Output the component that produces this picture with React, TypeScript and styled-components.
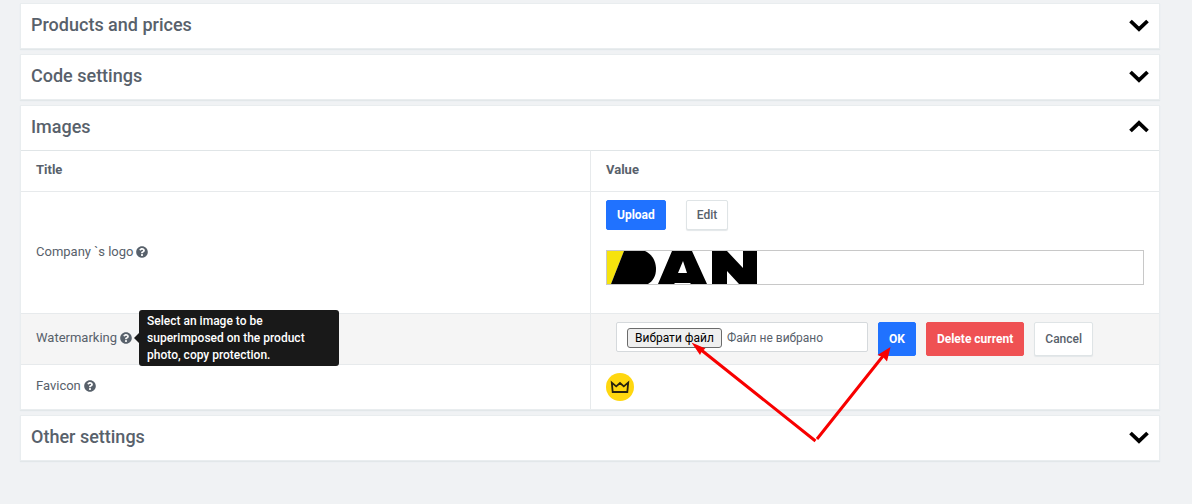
import React from "react";
import styled, { createGlobalStyle, css } from "styled-components";
import { FaQuestionCircle } from "react-icons/fa";

const GlobalStyle = createGlobalStyle`
  * { box-sizing: border-box; }
  body {
    margin: 0;
    background: #f0f2f4;
    color: #58616b;
    font-family: Roboto, "Liberation Sans", sans-serif;
    font-size: 13px;
    line-height: 20px;
  }
`;

const Page = styled.main`
  display: flex;
  flex-direction: column;
  gap: 5px;
  padding: 3px 32px 40px 20px;
`;

const Card = styled.section`
  background: #fff;
  border: 1px solid #e9edef;
  box-shadow: 0 1px 1px #e2e7e9;
`;

const CardHeading = styled.h2`
  margin: 0;
  font-size: 18px;
  font-weight: 500;
  line-height: 24px;
`;

const CardToggle = styled.button`
  display: flex;
  align-items: center;
  justify-content: space-between;
  width: 100%;
  padding: 9px 10px 11px;
  border: 0;
  background: none;
  color: inherit;
  font: inherit;
  text-align: left;
  cursor: pointer;
`;

const Chevron = styled.svg<{ $open: boolean }>`
  width: 20px;
  height: 14px;
  transform: ${(p) => (p.$open ? "rotate(180deg)" : "none")};
`;

const SettingsTable = styled.table`
  width: 100%;
  table-layout: fixed;
  border-collapse: separate;
  border-spacing: 0;
`;

const Row = styled.tr<{ $hovered?: boolean }>`
  background: ${(p) => (p.$hovered ? "#f5f5f5" : "#fff")};
`;

const cell = css`
  border-top: 1px solid #e7eaec;
  padding: 8px 15px;
  text-align: left;
`;

const HeadCell = styled.th`
  border-top: 1px solid #e0e5e7;
  padding: 9px 15px 11px;
  text-align: left;
  font-weight: 700;
  & + & { border-left: 1px solid #e7eaec; }
`;

const NameCell = styled.th`
  ${cell}
  padding: 7px 15px 9px;
  font-weight: 400;
`;

const ValueCell = styled.td`
  ${cell}
  border-left: 1px solid #e7eaec;
`;

const NameLine = styled.div`
  display: flex;
  align-items: center;
  gap: 3px;
`;

const HelpAnchor = styled.span`
  position: relative;
  display: flex;
`;

const Tooltip = styled.span`
  position: absolute;
  left: 19px;
  top: 50%;
  transform: translateY(-50%);
  width: 200px;
  padding: 3px 8px 2px;
  border-radius: 3px;
  background: #191919;
  color: #fff;
  font-size: 12px;
  font-weight: 500;
  line-height: 17px;
  z-index: 2;
  &::before {
    content: "";
    position: absolute;
    left: -5px;
    top: 50%;
    margin-top: -5px;
    border: solid transparent;
    border-width: 5px 5px 5px 0;
    border-right-color: #191919;
  }
`;

const tones = {
  primary: { bg: "#2072ff", fg: "#fff", line: "#2072ff", weight: 700 },
  danger: { bg: "#ef5153", fg: "#fff", line: "#ef5153", weight: 700 },
  plain: { bg: "#fff", fg: "#58616b", line: "#dfe4e6", weight: 500 },
};

const Button = styled.button<{ $tone: keyof typeof tones; $tall?: boolean }>`
  height: ${(p) => (p.$tall ? 34 : 30)}px;
  padding: 0 10px;
  border: 1px solid ${(p) => tones[p.$tone].line};
  border-radius: 2px;
  background: ${(p) => tones[p.$tone].bg};
  color: ${(p) => tones[p.$tone].fg};
  box-shadow: ${(p) => (p.$tone === "plain" ? "0 1px 1px #e3e7e9" : "none")};
  font: ${(p) => tones[p.$tone].weight} 12px/18px Roboto, "Liberation Sans", sans-serif;
  white-space: nowrap;
  cursor: pointer;
`;

const LogoActions = styled.div`
  display: flex;
  gap: 20px;
  margin-bottom: 20px;
`;

const LogoFrame = styled.div`
  height: 35px;
  margin-bottom: 20px;
  border: 1px solid #c8c8c8;
  svg { display: block; }
`;

const UploadForm = styled.form`
  position: relative;
  display: flex;
  align-items: flex-start;
  gap: 10px;
  margin-left: 10px;
`;

const FileField = styled.label`
  display: flex;
  align-items: center;
  gap: 5px;
  width: 252px;
  height: 30px;
  padding: 1px 10px 0;
  border: 1px solid #d5d9dc;
  border-radius: 2px;
  background: #fff;
  font-size: 12px;
  white-space: nowrap;
`;

const HiddenFile = styled.input`
  position: absolute;
  width: 1px;
  height: 1px;
  opacity: 0;
`;

const FileButton = styled.span`
  padding: 0 7px;
  border: 1px solid #6b6b6b;
  border-radius: 3px;
  background: #efefef;
  color: #000;
  line-height: 18px;
`;

const Pointers = styled.svg`
  position: absolute;
  left: 74px;
  top: 18px;
  width: 204px;
  height: 104px;
  pointer-events: none;
  z-index: 3;
`;

const Favicon = styled.svg`
  display: block;
  width: 28px;
  height: 28px;
`;

function Section({ title, open = false, children }: { title: string; open?: boolean; children?: React.ReactNode }) {
  return (
    <Card>
      <CardHeading>
        <CardToggle type="button" aria-expanded={open}>
          {title}
          <Chevron $open={open} viewBox="0 0 20 14" aria-hidden="true">
            <path d="M1.5 3 10 11.2 18.5 3" fill="none" stroke="#000" strokeWidth="3.8" />
          </Chevron>
        </CardToggle>
      </CardHeading>
      {children}
    </Card>
  );
}

function Name({ text, hint }: { text: string; hint?: string }) {
  return (
    <NameCell scope="row">
      <NameLine>
        {text}
        <HelpAnchor>
          <FaQuestionCircle size={12} aria-hidden="true" />
          {hint && <Tooltip role="tooltip">{hint}</Tooltip>}
        </HelpAnchor>
      </NameLine>
    </NameCell>
  );
}

export default function App() {
  return (
    <>
      <GlobalStyle />
      <Page>
        <Section title="Products and prices" />
        <Section title="Code settings" />
        <Section title="Images" open>
          <SettingsTable>
            <thead>
              <Row>
                <HeadCell scope="col">Title</HeadCell>
                <HeadCell scope="col">Value</HeadCell>
              </Row>
            </thead>
            <tbody>
              <Row>
                <Name text="Company `s logo" />
                <ValueCell>
                  <LogoActions>
                    <Button type="button" $tone="primary">Upload</Button>
                    <Button type="button" $tone="plain">Edit</Button>
                  </LogoActions>
                  <LogoFrame>
                    <svg width="150" height="33" viewBox="0 0 150 33" role="img" aria-label="Company logo">
                      <path d="M0 0H17L4 33H0Z" fill="#f6e30d" />
                      <path d="M17 0H38C46 4 49 11 49 18C49 25 46 30 41 33H4Z" />
                      <path fillRule="evenodd" d="M65 0H85L100 33H84L83 32H68L67 33H51ZM76 10L71 22H80Z" />
                      <path d="M105 0H120L136 17V0H150V33H132L120 20V33H105Z" />
                    </svg>
                  </LogoFrame>
                </ValueCell>
              </Row>
              <Row $hovered>
                <Name
                  text="Watermarking"
                  hint="Select an image to be superimposed on the product photo, copy protection."
                />
                <ValueCell>
                  <UploadForm onSubmit={(e) => e.preventDefault()}>
                    <FileField>
                      <HiddenFile type="file" />
                      <FileButton>Вибрати файл</FileButton>
                      Файл не вибрано
                    </FileField>
                    <Button type="submit" $tone="primary" $tall>OK</Button>
                    <Button type="button" $tone="danger" $tall>Delete current</Button>
                    <Button type="button" $tone="plain" $tall>Cancel</Button>
                    <Pointers viewBox="0 0 204 104" aria-hidden="true">
                      <path d="M10 9 125.5 101M127 99 193 16" fill="none" stroke="#f80000" strokeWidth="3" />
                      <path d="M1.5 2.5 15.5 8.5 12 11 10 15ZM200.5 7 197 21.5 193 17 187.5 15Z" fill="#f80000" />
                    </Pointers>
                  </UploadForm>
                </ValueCell>
              </Row>
              <Row>
                <Name text="Favicon" />
                <ValueCell>
                  <Favicon viewBox="0 0 28 28" role="img" aria-label="Favicon">
                    <circle cx="14" cy="14" r="14" fill="#ffd70f" />
                    <path d="M5.8 9.6 10.2 13.4 14 10 17.8 13.4 22.2 9.6 21.3 19H6.7Z" fill="none" stroke="#29230f" strokeWidth="1.8" />
                  </Favicon>
                </ValueCell>
              </Row>
            </tbody>
          </SettingsTable>
        </Section>
        <Section title="Other settings" />
      </Page>
    </>
  );
}
